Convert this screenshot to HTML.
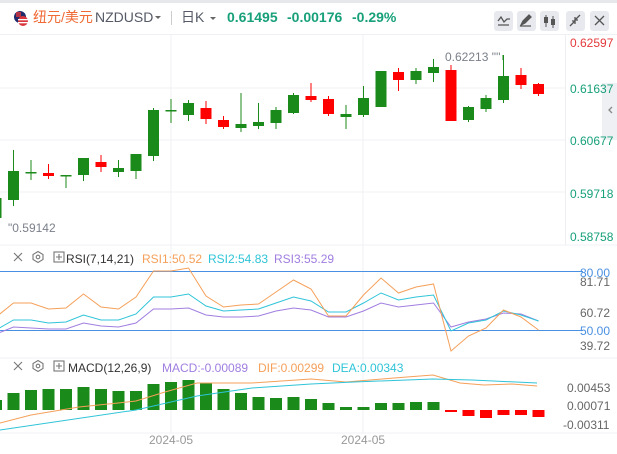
<!DOCTYPE html>
<html><head><meta charset="utf-8"><style>
html,body{margin:0;padding:0;background:#fff;width:617px;height:454px;overflow:hidden;font-family:"Liberation Sans","Noto Sans CJK SC",sans-serif}
svg{position:absolute;left:0;top:0}
.t{font-family:"Liberation Sans","Noto Sans CJK SC",sans-serif}
</style></head><body>
<svg id="s" width="617" height="454" viewBox="0 0 617 454" xmlns="http://www.w3.org/2000/svg">
<rect x="0" y="0" width="617" height="3" fill="#e6e8ec"/>
<line x1="0" y1="34.5" x2="617" y2="34.5" stroke="#eef0f3"/>
<!-- flag -->
<circle cx="20" cy="17" r="6" fill="#1f2b6b"/>
<circle cx="23" cy="21" r="5" fill="#d9353c"/>
<rect x="18" y="19" width="10" height="1.3" fill="#fff"/><rect x="18" y="22" width="10" height="1.3" fill="#fff"/>
<rect x="16" y="12" width="5" height="5" fill="#d9353c" opacity=".8"/>
<text x="33" y="22" font-size="14" fill="#f06a35" class="t">纽元/美元</text>
<text x="95" y="22" font-size="14" fill="#555a66" class="t">NZDUSD</text>
<path d="M155 16l3 3 3-3z" fill="#666"/>
<line x1="171.5" y1="11" x2="171.5" y2="25" stroke="#ccc"/>
<text x="181" y="22" font-size="14" fill="#555a66" class="t">日K</text>
<path d="M210 17l3 3 3-3z" fill="#666"/>
<text x="227" y="22" font-size="14" font-weight="bold" fill="#17a07a" class="t">0.61495</text>
<text x="287" y="22" font-size="14" font-weight="bold" fill="#17a07a" class="t">-0.00176</text>
<text x="352" y="22" font-size="14" font-weight="bold" fill="#17a07a" class="t">-0.29%</text>
<g fill="#e7e9ee"><rect x="494" y="11" width="19" height="20" rx="3"/><rect x="517" y="11" width="19" height="20" rx="3"/><rect x="540" y="11" width="19" height="20" rx="3"/><rect x="566" y="11" width="19" height="20" rx="3"/><rect x="590" y="11" width="19" height="20" rx="3"/></g>
<path d="M498 21l3-4 3 5 3-3 3 0M498 25h11" stroke="#555" stroke-width="1.3" fill="none"/>
<path d="M521 25l2-4 6-6 2 2-6 6z M520 26h11" stroke="#555" stroke-width="1.3" fill="#555"/>
<path d="M546 15v12M553 16v12" stroke="#555"/><rect x="544" y="17" width="4" height="6" fill="#555"/><rect x="551" y="19" width="4" height="6" fill="#555"/>
<path d="M580 15l-5 5M575 17v3h3M570 26l5-5M575 24v-3h-3" stroke="#555" stroke-width="1.3" fill="none"/>
<path d="M595 16l9 9M604 16l-9 9" stroke="#555" stroke-width="1.3"/>
<!-- grid -->
<g stroke="#f0f1f4"><line x1="0" y1="88" x2="565" y2="88"/><line x1="0" y1="140" x2="565" y2="140"/><line x1="0" y1="192" x2="565" y2="192"/><line x1="171" y1="35" x2="171" y2="433"/><line x1="363" y1="35" x2="363" y2="433"/><line x1="0" y1="245" x2="617" y2="245"/><line x1="0" y1="358" x2="617" y2="358"/><line x1="0" y1="433" x2="617" y2="433"/></g>
<line x1="565.5" y1="35" x2="565.5" y2="245" stroke="#eceef2"/>
<rect x="602" y="83" width="15" height="57" fill="#eef0f3"/>
<path d="M612 107l-3 3 3 3" stroke="#888" fill="none" stroke-width="1.3"/>
<g font-size="12" class="t">
<text x="570" y="47" fill="#e4393c">0.62597</text>
<text x="570" y="93" fill="#17a07a">0.61637</text>
<text x="570" y="145" fill="#17a07a">0.60677</text>
<text x="570" y="198" fill="#17a07a">0.59718</text>
<text x="570" y="241" fill="#17a07a">0.58758</text>
<text x="8" y="232" fill="#7a7f8a">"0.59142</text>
<text x="445" y="61" fill="#7a7f8a">0.62213 "''</text>
</g>
<g id="c"></g>
<!-- RSI -->
<line x1="0" y1="271.5" x2="583" y2="271.5" stroke="#4a90e2"/>
<line x1="0" y1="330.5" x2="583" y2="330.5" stroke="#4a90e2"/>
<g font-size="12" class="t">
<text x="580" y="277" fill="#4a90e2">80.00</text>
<text x="580" y="286" fill="#666">81.71</text>
<text x="580" y="317" fill="#666">60.72</text>
<text x="580" y="335" fill="#4a90e2">50.00</text>
<text x="580" y="350" fill="#666">39.72</text>
<text x="66" y="263" fill="#333">RSI(7,14,21)</text>
<text x="142" y="263" fill="#f5a05a">RSI1:50.52</text>
<text x="208" y="263" fill="#2fc4d8">RSI2:54.83</text>
<text x="274" y="263" fill="#a07ee0">RSI3:55.29</text>
<text x="68" y="372" fill="#333">MACD(12,26,9)</text>
<text x="162" y="372" fill="#a07ee0">MACD:-0.00089</text>
<text x="258" y="372" fill="#f5a05a">DIF:0.00299</text>
<text x="332" y="372" fill="#2fc4d8">DEA:0.00343</text>
<text x="567" y="392" fill="#666">0.00453</text>
<text x="567" y="410" fill="#666">0.00071</text>
<text x="563" y="429" fill="#666">-0.00311</text>
<text x="149" y="444" fill="#999">2024-05</text>
<text x="341" y="444" fill="#999">2024-05</text>
</g>
<g stroke="#777" fill="none" stroke-width="1.1">
<path d="M14 253l8 8M22 253l-8 8M14 362l8 8M22 362l-8 8"/>
<path d="M38 251.5l5 3v5l-5 3-5-3v-5z"/><circle cx="38" cy="257" r="1.8"/>
<path d="M38 360.5l5 3v5l-5 3-5-3v-5z"/><circle cx="38" cy="366" r="1.8"/>
<rect x="54" y="252" width="10" height="10"/><path d="M59 254v6M56 257h6"/>
<rect x="54" y="361" width="10" height="10"/><path d="M59 363v6M56 366h6"/>
</g>
<g id="r"></g>
</svg>
<script>
var NS="http://www.w3.org/2000/svg";
function X(i){return 13.5+17.5*(i-1);}
var C=[[198,218,198,225,1],[171,200,150,206,1],[172,173,160,180,1],[173,176,164,179,0],[175,176,175,188,1],[158,175,158,181,1],[162,167,155,172,0],[168,172,160,177,1],[154,171,154,179,1],[110,156,108,161,1],[110,111,99,123,1],[103,115,100,121,1],[108,119,101,124,0],[120,127,116,129,0],[124,128,93,132,1],[122,126,103,129,1],[110,123,107,129,1],[95,113,93,114,1],[96,100,83,102,0],[99,114,96,116,0],[114,117,105,129,1],[98,115,86,117,1],[71,107,71,107,1],[72,80,68,91,0],[71,80,68,84,1],[67,73,59,82,1],[70,121,65,121,0],[107,120,106,122,1],[98,109,95,112,1],[76,100,55,103,1],[75,85,68,89,0],[84,94,83,96,0]];
var h="";
C.forEach(function(c,i){var x=X(i),col=c[4]?"#1a8a1a":"#f00";
h+='<line x1="'+x+'" x2="'+x+'" y1="'+c[2]+'" y2="'+c[3]+'" stroke="'+col+'" stroke-width="1"/>';
h+='<rect x="'+(x-5.5)+'" y="'+c[0]+'" width="11" height="'+Math.max(1.5,c[1]-c[0])+'" fill="'+col+'"/>';});
h+='<line x1="503" x2="503" y1="55" y2="60" stroke="#1a8a1a"/>';
document.getElementById("c").innerHTML=h;
function P(a,col){var d="";a.forEach(function(y,i){d+=(i?"L":"M")+X(i)+" "+y;});return '<path d="'+d+'" stroke="'+col+'" fill="none" stroke-width="1"/>';}
var o=[317,303,303,309,308,294,307,309,297,271,271,268,296,307,305,304,292,280,289,316,316,295,278,293,287,284,351,336,328,310,317,330];
var cy=[330,320,320,323,322,315,320,320,314,297,297,294,306,311,310,309,303,297,301,312,312,303,293,300,297,295,331,323,320,311,315,321];
var pu=[334,327,328,329,329,323,326,327,323,309,309,308,315,317,317,316,311,308,310,317,317,311,303,307,305,303,327,322,319,313,314,321];
var r=P(pu,"#a07ee0")+P(cy,"#2fc4d8")+P(o,"#f5a05a");
var tops=[400,393,390,389,389,387,389,391,391,384,382,380,383,389,393,397,398,397,399,403,407,407,403,403,402,402];
tops.forEach(function(t,i){r+='<rect x="'+(X(i)-6)+'" y="'+t+'" width="12" height="'+(410-t)+'" fill="#1a8a1a"/>';});
var rb=[412,416,418,415,415,417];
rb.forEach(function(b,j){var i=26+j;r+='<rect x="'+(X(i)-6)+'" y="410" width="12" height="'+(b-410)+'" fill="#f00"/>';});
r+='<path d="M0 423L31 415L79 407L118 403L136 401L165 392L197 383L252 383L311 379L346 382L394 378L433 375L460 383L484 385L512 384L537 386" stroke="#f5a05a" fill="none"/>';
r+='<path d="M0 430L136 410L197 396L252 388L311 384L354 382L433 379L472 380L537 383" stroke="#2fc4d8" fill="none"/>';
document.getElementById("r").innerHTML=r;
</script>
</body></html>
